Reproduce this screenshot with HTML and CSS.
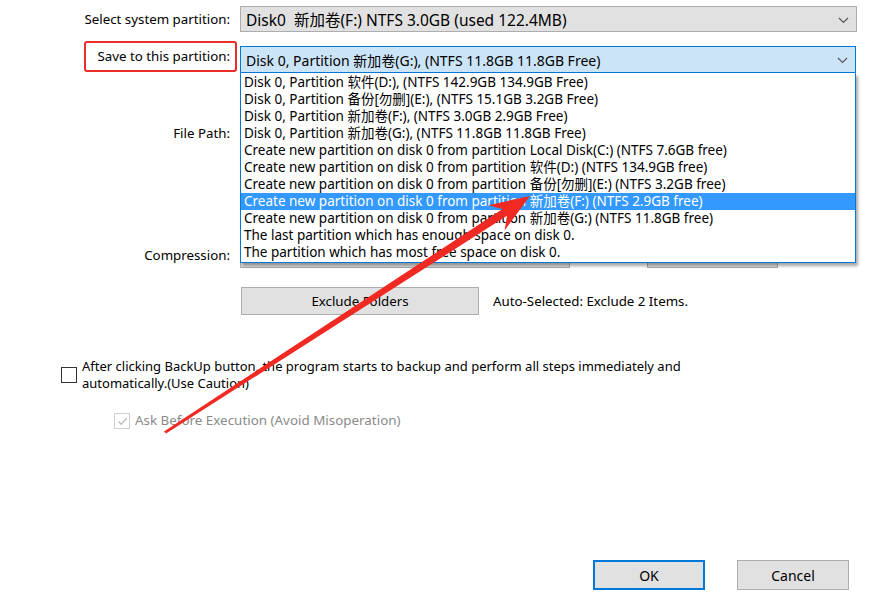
FILE: index.html
```html
<!DOCTYPE html>
<html lang="en">
<head>
  <meta charset="UTF-8">
  <title>Backup Settings</title>
  <link rel="stylesheet" href="styles.css">
</head>
<body>

<div class="dialog">

  <!-- system partition -->
  <div class="row row-system">
    <div class="lbl">Select system partition:</div>
    <div class="combo combo-system">
      <span class="combo-text">Disk0&nbsp; 新加卷(F:) NTFS 3.0GB (used 122.4MB)</span>
      <svg class="chev" width="11" height="7" viewBox="0 0 11 7"><path d="M1 1 L5.5 5.5 L10 1" fill="none" stroke="#555" stroke-width="1.2"/></svg>
    </div>
  </div>

  <!-- target partition, list is open -->
  <div class="row row-save">
    <div class="lbl"><span class="mark">Save to this partition:</span></div>
    <div class="combo-wrap">
      <div class="combo combo-open">
        <span class="combo-text">Disk 0, Partition 新加卷(G:), (NTFS 11.8GB 11.8GB Free)</span>
        <svg class="chev" width="11" height="7" viewBox="0 0 11 7"><path d="M1 1 L5.5 5.5 L10 1" fill="none" stroke="#555" stroke-width="1.2"/></svg>
      </div>
      <ul class="droplist">
        <li>Disk 0, Partition 软件(D:), (NTFS 142.9GB 134.9GB Free)</li>
        <li>Disk 0, Partition 备份[勿删](E:), (NTFS 15.1GB 3.2GB Free)</li>
        <li>Disk 0, Partition 新加卷(F:), (NTFS 3.0GB 2.9GB Free)</li>
        <li>Disk 0, Partition 新加卷(G:), (NTFS 11.8GB 11.8GB Free)</li>
        <li>Create new partition on disk 0 from partition Local Disk(C:) (NTFS 7.6GB free)</li>
        <li>Create new partition on disk 0 from partition 软件(D:) (NTFS 134.9GB free)</li>
        <li>Create new partition on disk 0 from partition 备份[勿删](E:) (NTFS 3.2GB free)</li>
        <li class="selected">Create new partition on disk 0 from partition 新加卷(F:) (NTFS 2.9GB free)</li>
        <li>Create new partition on disk 0 from partition 新加卷(G:) (NTFS 11.8GB free)</li>
        <li>The last partition which has enough space on disk 0.</li>
        <li>The partition which has most free space on disk 0.</li>
      </ul>
    </div>
  </div>

  <div class="row row-path">
    <div class="lbl">File Path:</div>
    <div class="field"></div>
  </div>

  <div class="row row-compress">
    <div class="lbl">Compression:</div>
    <div class="slider"></div>
    <div class="btn btn-level"></div>
  </div>

  <div class="row row-exclude">
    <div class="lbl"></div>
    <div class="btn btn-exclude">Exclude Folders</div>
    <span class="note">Auto-Selected: Exclude 2 Items.</span>
  </div>

  <div class="check-row">
    <span class="box"></span>
    <p>After clicking BackUp button, the program starts to backup and perform all steps immediately and<br>automatically.(Use Caution)</p>
  </div>

  <div class="check-row sub disabled">
    <span class="box">
      <svg width="13" height="13" viewBox="0 0 13 13"><path d="M2.5 6.5 L5.2 9.3 L10.8 3.2" fill="none" stroke="#bdbdbd" stroke-width="1.3"/></svg>
    </span>
    <p>Ask Before Execution (Avoid Misoperation)</p>
  </div>

  <div class="actions">
    <div class="btn btn-ok">OK</div>
    <div class="btn btn-cancel">Cancel</div>
  </div>

  <!-- red annotation arrow drawn on top of the screenshot -->
  <svg class="arrow" width="880" height="599" viewBox="0 0 880 599">
    <polygon fill="#f02a22" points="164.0,431.4 502.6,209.0 488.2,205.2 530,196 504.6,230.4 507.0,215.8 166.0,433.6" />
  </svg>
</div>

</body>
</html>
```

FILE: styles.css
```css
/* ============================
   Base
============================ */
* {
  box-sizing: border-box;
}

body {
  margin: 0;
  background: #fff;
  font-family: "Noto Sans", "Noto Sans CJK SC", sans-serif;
  font-size: 13.3px;
  color: #000;
}

.dialog {
  position: relative;
  width: 880px;
  height: 599px;
  padding-top: 6px;
}

/* ============================
   Form rows
============================ */
.row {
  display: flex;
  align-items: center;
  gap: 3px;
}

.lbl {
  width: 237px;
  flex: none;
  text-align: right;
  padding-right: 7px;
  white-space: nowrap;
}

.row-system {
  height: 26px;
}

.row-save {
  margin-top: 9px;
  height: 32px;
  align-items: flex-end;
}

.row-save .lbl {
  padding-right: 0;
  align-self: flex-start;
}

.mark {
  display: inline-block;
  height: 31px;
  line-height: 27px;
  padding: 0 5px 0 12px;
  border: 2px solid #ec2d26;
  border-radius: 3px;
}

.combo {
  position: relative;
  width: 617px;
  height: 26px;
  display: flex;
  align-items: center;
  padding-left: 5px;
  font-size: 14px;
  background: #e1e1e1;
  border: 1px solid #adadad;
}

.combo-system {
  font-size: 15.5px;
}

.combo-wrap {
  position: relative;
  width: 616px;
}

.combo-open {
  width: 616px;
  height: 27px;
  background: #cce4f7;
  border-color: #0078d7;
}

.chev {
  position: absolute;
  right: 7px;
  top: 10px;
}

/* dropdown list */
.droplist {
  position: absolute;
  top: 27px;
  left: 0;
  width: 616px;
  margin: 0;
  padding: 1px 0 1px;
  list-style: none;
  font-size: 13.5px;
  background: #fff;
  border: 1px solid #0078d7;
  border-top: none;
  box-shadow: 2px 3px 3px rgba(0, 0, 0, 0.35);
  z-index: 2;
}

.droplist li {
  height: 17px;
  line-height: 17px;
  padding-left: 3px;
  white-space: nowrap;
}

.droplist li.selected {
  background: #3399ff;
  color: #fff;
}

.row-path {
  margin-top: 47px;
  height: 26px;
}

.field {
  width: 538px;
  height: 26px;
  border: 1px solid #7a7a7a;
}

.row-compress {
  margin-top: 96px;
  height: 26px;
}

.slider {
  width: 330px;
  height: 26px;
  background: #e1e1e1;
  border: 1px solid #adadad;
}

.btn {
  display: flex;
  align-items: center;
  justify-content: center;
  background: #e1e1e1;
  border: 1px solid #adadad;
}

.btn-level {
  width: 131px;
  height: 26px;
  margin-left: 74px;
}

.row-exclude {
  margin-top: 19px;
  height: 28px;
}

.btn-exclude {
  width: 238px;
  height: 28px;
  margin-left: 1px;
}

.note {
  margin-left: 11px;
}

/* ============================
   Checkboxes
============================ */
.check-row {
  display: flex;
  align-items: center;
  margin: 43px 0 0 61px;
  font-size: 13px;
}

.check-row p {
  margin: 0 0 0 5px;
  line-height: 17px;
}

.box {
  width: 16px;
  height: 16px;
  flex: none;
  border: 1px solid #333;
  background: #fff;
}

.check-row.sub {
  margin: 20px 0 0 114px;
  font-size: 13.4px;
}

.disabled .box {
  border-color: #cfcfcf;
}

.disabled .box svg {
  display: block;
  margin: 1px;
}

.disabled p {
  color: #8a8a8a;
}

/* ============================
   Bottom buttons
============================ */
.actions {
  position: absolute;
  top: 560px;
  left: 593px;
  display: flex;
  gap: 32px;
  font-size: 14px;
}

.btn-ok,
.btn-cancel {
  width: 112px;
  height: 30px;
}

.btn-ok {
  border: 2px solid #0078d7;
}

.arrow {
  position: absolute;
  left: 0;
  top: 0;
  pointer-events: none;
  z-index: 5;
}
```
